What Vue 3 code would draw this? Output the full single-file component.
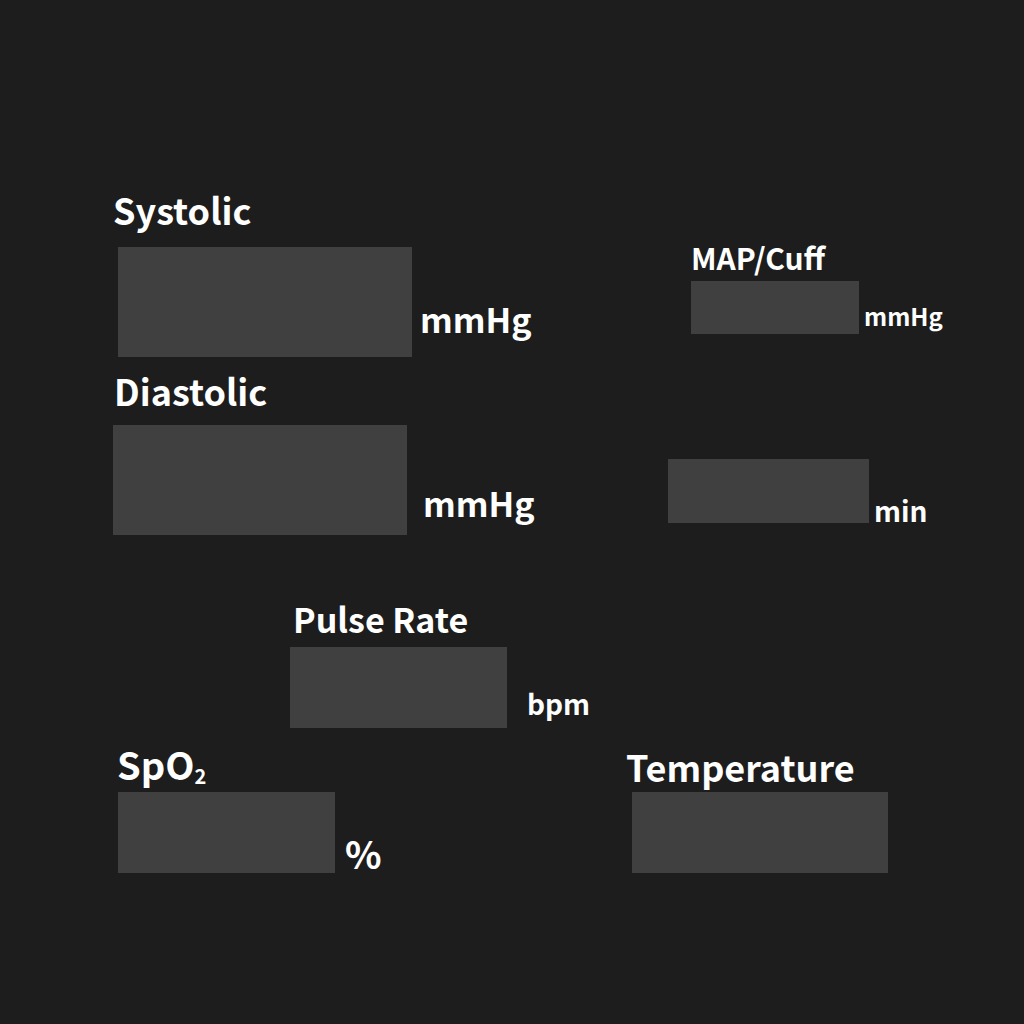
<script setup>
</script>

<template>
  <main class="monitor">
    <section class="pressure">
      <div class="column arterial">
        <div class="field systolic">
          <label for="systolic">Systolic</label>
          <div class="reading">
            <input id="systolic" type="text" readonly />
            <span class="unit">mmHg</span>
          </div>
        </div>
        <div class="field diastolic">
          <label for="diastolic">Diastolic</label>
          <div class="reading">
            <input id="diastolic" type="text" readonly />
            <span class="unit">mmHg</span>
          </div>
        </div>
      </div>
      <div class="column cuff">
        <div class="field map">
          <label for="map">MAP/Cuff</label>
          <div class="reading">
            <input id="map" type="text" readonly />
            <span class="unit">mmHg</span>
          </div>
        </div>
        <div class="field interval">
          <div class="reading">
            <input id="interval" type="text" readonly />
            <label class="unit" for="interval">min</label>
          </div>
        </div>
      </div>
    </section>

    <section class="heart">
      <div class="field pulse">
        <label for="pulse">Pulse Rate</label>
        <div class="reading">
          <input id="pulse" type="text" readonly />
          <span class="unit">bpm</span>
        </div>
      </div>
    </section>

    <section class="vitals">
      <div class="field oxygen">
        <label for="oxygen">SpO<sub>2</sub></label>
        <div class="reading">
          <input id="oxygen" type="text" readonly />
          <span class="unit">%</span>
        </div>
      </div>
      <div class="field temperature">
        <label for="temperature">Temperature</label>
        <div class="reading">
          <input id="temperature" type="text" readonly />
        </div>
      </div>
    </section>
  </main>
</template>

<style>
body {
  margin: 0;
  background: #1d1d1d;
}
</style>

<style scoped>
.monitor {
  box-sizing: border-box;
  min-height: 100vh;
  padding: 185px 0 64px;
  background: #1d1d1d;
  color: #fff;
  font-family: "Noto Sans CJK JP", "Noto Sans", sans-serif;
  font-weight: 700;
}

.pressure {
  display: grid;
  grid-template-columns: 167fr 89fr;
}

.heart {
  display: grid;
  grid-template-columns: 145fr 367fr;
  margin-top: 60px;
}

.vitals {
  display: grid;
  grid-template-columns: 79fr 49fr;
  align-items: end;
  margin-top: 12px;
}

.column,
.field {
  display: flex;
  flex-direction: column;
}

.arterial {
  gap: 9px;
  padding-left: 113px;
}

.cuff {
  gap: 125px;
  padding-top: 52px;
}

.field > label {
  font-size: 36px;
  line-height: 48px;
  white-space: nowrap;
}

.reading {
  display: flex;
  align-items: flex-end;
  gap: 10px;
}

.unit {
  font-size: 34px;
  line-height: 40px;
}

input {
  box-sizing: border-box;
  flex: none;
  width: 294px;
  height: 110px;
  margin: 0;
  padding: 0 12px;
  border: 0;
  border-radius: 0;
  outline: 0;
  background: #404040;
  color: #fff;
  font: inherit;
  font-size: 36px;
}

.systolic {
  gap: 14px;
}

.systolic .reading {
  gap: 8px;
  padding-left: 5px;
}

.systolic .unit {
  padding-bottom: 18px;
}

.diastolic {
  gap: 11px;
}

.diastolic > label {
  padding-left: 1px;
}

.diastolic .reading {
  gap: 16px;
}

.diastolic .unit {
  padding-bottom: 12px;
}

.map {
  gap: 4px;
  padding-left: 23px;
}

.map label {
  font-size: 30px;
  line-height: 40px;
}

.map .reading,
.interval .reading {
  gap: 5px;
}

.map input {
  width: 168px;
  height: 53px;
}

.map .unit {
  font-size: 24px;
  line-height: 36px;
}

.interval input {
  width: 201px;
  height: 64px;
}

.interval .unit {
  font-size: 28px;
  line-height: 26px;
}

.pulse,
.oxygen {
  gap: 4px;
}

.pulse {
  grid-column: 2;
}

.pulse > label {
  padding-left: 3px;
  font-size: 34px;
}

.pulse .reading {
  gap: 20px;
}

.pulse input,
.oxygen input {
  width: 217px;
  height: 81px;
}

.pulse .unit {
  padding-bottom: 5px;
  font-size: 28px;
}

.oxygen {
  padding-left: 118px;
}

.oxygen > label,
.oxygen .unit {
  font-size: 38px;
}

.oxygen > label {
  margin-left: -1px;
}

.oxygen sub {
  position: relative;
  top: 4px;
  font-size: 20px;
  line-height: 0;
  vertical-align: baseline;
}

.temperature {
  gap: 2px;
}

.temperature > label {
  margin-left: -6px;
}

.temperature input {
  width: 256px;
  height: 81px;
}
</style>
